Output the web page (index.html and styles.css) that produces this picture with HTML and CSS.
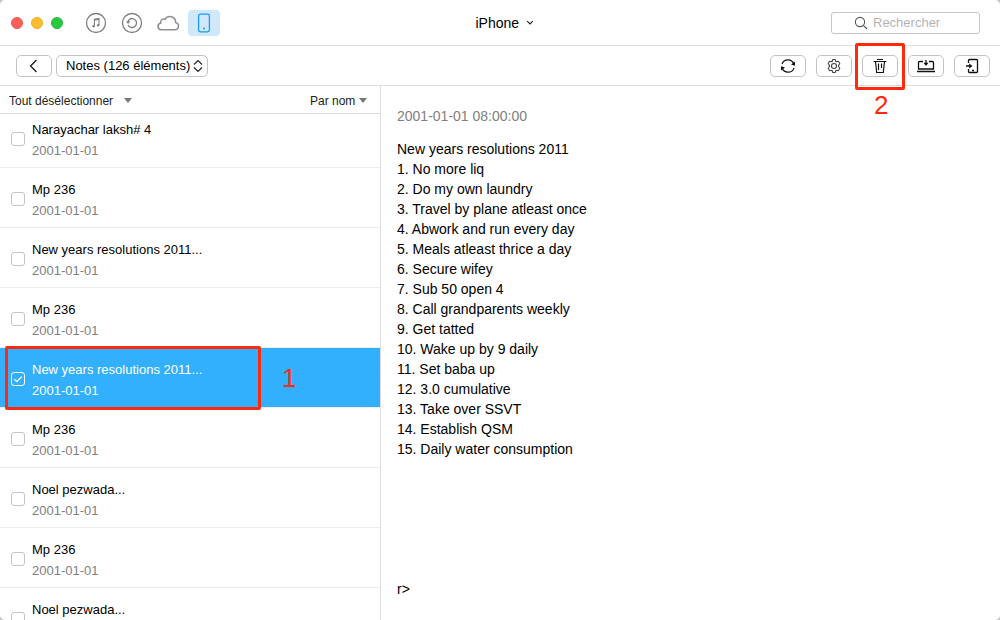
FILE: index.html
```html
<!DOCTYPE html>
<html lang="fr">
<head>
    <meta charset="UTF-8">
    <meta name="viewport" content="width=device-width, initial-scale=1.0">
    <title>iPhone - Notes</title>
    <link rel="stylesheet" href="styles.css">
</head>
<body>
    <div class="window">
        <header class="titlebar">
            <div class="titlebar-left">
                <div class="lights">
                    <button class="light red" aria-label="Fermer"></button>
                    <button class="light yellow" aria-label="Réduire"></button>
                    <button class="light green" aria-label="Agrandir"></button>
                </div>
                <nav class="tabs">
                    <button class="tab" aria-label="iTunes">
                        <svg width="22" height="22" viewBox="0 0 22 22" fill="none" stroke="#808080">
                            <circle cx="11" cy="11" r="9.5" stroke-width="1.3"/>
                            <path d="M9.4 14V7.2l4.600-.9v6.700M9.400 8.200l4.600-.9" stroke-width="1.1"/>
                            <ellipse cx="8.600" cy="14.200" rx="1" ry=".8" fill="#808080"/>
                            <ellipse cx="13.200" cy="13.200" rx="1" ry=".8" fill="#808080"/>
                        </svg>
                    </button>
                    <button class="tab" aria-label="Sauvegardes">
                        <svg width="22" height="22" viewBox="0 0 22 22" fill="none" stroke="#808080">
                            <circle cx="11" cy="11" r="9.5" stroke-width="1.3"/>
                            <path d="M8.200 7.500A4.500 4.500 0 1 1 7 13" stroke-width="1.300"/>
                            <path d="M5.200 9.200h4.200L7 12z" fill="#808080" stroke="none"/>
                            <path d="M7 10.500a4.500 4.500 0 0 1 1.200-3" stroke-width="1.300"/>
                        </svg>
                    </button>
                    <button class="tab" aria-label="iCloud">
                        <svg width="24" height="18" viewBox="0 0 24 18" fill="none" stroke="#8f8f8f" stroke-width="1.5">
                            <path d="M5 15.800h13.800a3.700 3.700 0 0 0 .8-7.300A5.700 5.700 0 0 0 9 5.400 3 3 0 0 0 4.800 8.900 3.500 3.500 0 0 0 5 15.800z"/>
                        </svg>
                    </button>
                    <button class="tab active" aria-label="Appareil">
                        <svg width="14" height="20" viewBox="0 0 14 20" fill="none" stroke="#1a9bf0">
                            <rect x="1.6" y="1.200" width="10.800" height="17.600" rx="1.800" stroke-width="1.300"/>
                            <circle cx="7" cy="15.500" r="1" fill="#1a9bf0" stroke="none"/>
                        </svg>
                    </button>
                </nav>
            </div>
            <div class="dropdown device">
                <select aria-label="Appareil">
                    <option>iPhone</option>
                </select>
                <svg width="8" height="6" viewBox="0 0 8 6" fill="none" stroke="#222" stroke-width="1.2"><path d="M1.200 1.200L4 4l2.800-2.800"/></svg>
            </div>
            <div class="search">
                <svg width="14" height="14" viewBox="0 0 14 14" fill="none" stroke="#555" stroke-width="1.1">
                    <circle cx="6" cy="6" r="4.600"/><path d="M9.300 9.300L13 13"/>
                </svg>
                <input type="text" placeholder="Rechercher" aria-label="Rechercher">
            </div>
        </header>

        <div class="toolbar">
            <button class="tool" aria-label="Retour">
                <svg width="16" height="16" viewBox="0 0 16 16" fill="none" stroke="#111" stroke-width="1.200"><path d="M10.500 2L4.500 8l6 6"/></svg>
            </button>
            <div class="dropdown category">
                <select aria-label="Catégorie">
                    <option>Notes (126 éléments)</option>
                </select>
                <svg width="10" height="14" viewBox="0 0 10 14" fill="none" stroke="#222" stroke-width="1.200"><path d="M1 5.500l4-4 4 4M1 8.500l4 4 4-4"/></svg>
            </div>
            <div class="actions">
                <button class="tool" aria-label="Actualiser">
                    <svg width="16" height="16" viewBox="0 0 16 16" fill="none" stroke="#111" stroke-width="1.200">
                        <path d="M2 6.200A6.200 6.200 0 0 1 13.800 6M14 9.800A6.200 6.200 0 0 1 2.200 10"/>
                        <path d="M15 3.500v4.200l-4-1.200zM1 12.500V8.300l4 1.200z" fill="#111" stroke="none"/>
                    </svg>
                </button>
                <button class="tool" aria-label="Réglages">
                    <svg width="16" height="16" viewBox="0 0 16 16" fill="none" stroke="#444" stroke-width="1.100" stroke-linejoin="round">
                        <path d="M6.800 1.500h2.400l.8 2.200 2.300-.4 1.500 2.200-1.500 2.500 1.500 2.500-1.500 2.200-2.300-.4-.8 2.200H6.800L6 12.300l-2.300.4-1.500-2.200L3.700 8 2.200 5.500l1.500-2.200 2.300.4z"/>
                        <circle cx="8" cy="8" r="2.500"/>
                    </svg>
                </button>
                <div class="tool-slot">
                    <button class="tool" aria-label="Supprimer">
                        <svg width="16" height="16" viewBox="0 0 16 16" fill="none" stroke="#111" stroke-width="1.200">
                            <path d="M1.500 3.500h13M5 1.500h6M3.500 3.500l1.200 11h6.600l1.200-11M6.500 5.500v6.500M9.500 5.500v4.500"/>
                        </svg>
                    </button>
                    <div class="callout callout-delete"></div>
                    <span class="step step-delete">2</span>
                </div>
                <button class="tool" aria-label="Exporter vers l'ordinateur">
                    <svg width="20" height="16" viewBox="0 0 20 16" fill="none" stroke="#111" stroke-width="1.300">
                        <path d="M7 3.500H3.500q-1 0-1 1v6.500h15V4.500q0-1-1-1H13M1 13.500h18M10 2v4"/>
                        <path d="M7.500 4.800h5L10 8z" fill="#111" stroke="none"/>
                    </svg>
                </button>
                <button class="tool" aria-label="Exporter vers l'appareil">
                    <svg width="16" height="16" viewBox="0 0 16 16" fill="none" stroke="#111" stroke-width="1.300">
                        <path d="M4.500 5V2.500q0-1 1-1h7q1 0 1 1v11q0 1-1 1h-7q-1 0-1-1V11M2 8h4M8 12.500h2"/>
                        <path d="M5.200 5.500v5L8.500 8z" fill="#111" stroke="none"/>
                    </svg>
                </button>
            </div>
        </div>

        <main class="content">
            <section class="sidebar">
                <div class="list-header">
                    <div class="dropdown">
                        <select aria-label="Sélection">
                            <option>Tout désélectionner</option>
                        </select>
                        <span class="caret"></span>
                    </div>
                    <div class="dropdown sort">
                        <select aria-label="Trier">
                            <option>Par nom</option>
                        </select>
                        <span class="caret"></span>
                    </div>
                </div>
                <div class="list">
                    <label class="note">
                        <input type="checkbox">
                        <span class="note-text"><span class="note-title">Narayachar laksh# 4</span><span class="note-date">2001-01-01</span></span>
                    </label>
                    <label class="note">
                        <input type="checkbox">
                        <span class="note-text"><span class="note-title">Mp 236</span><span class="note-date">2001-01-01</span></span>
                    </label>
                    <label class="note">
                        <input type="checkbox">
                        <span class="note-text"><span class="note-title">New years resolutions 2011...</span><span class="note-date">2001-01-01</span></span>
                    </label>
                    <label class="note">
                        <input type="checkbox">
                        <span class="note-text"><span class="note-title">Mp 236</span><span class="note-date">2001-01-01</span></span>
                    </label>
                    <label class="note selected">
                        <input type="checkbox" checked>
                        <svg class="tick" width="14" height="14" viewBox="0 0 14 14" fill="none" stroke="#fff" stroke-width="1.200"><path d="M3.300 7.200l2.500 2.500 5-5.200"/></svg>
                        <span class="note-text"><span class="note-title">New years resolutions 2011...</span><span class="note-date">2001-01-01</span></span>
                        <span class="callout callout-note"></span>
                        <span class="step step-note">1</span>
                    </label>
                    <label class="note">
                        <input type="checkbox">
                        <span class="note-text"><span class="note-title">Mp 236</span><span class="note-date">2001-01-01</span></span>
                    </label>
                    <label class="note">
                        <input type="checkbox">
                        <span class="note-text"><span class="note-title">Noel pezwada...</span><span class="note-date">2001-01-01</span></span>
                    </label>
                    <label class="note">
                        <input type="checkbox">
                        <span class="note-text"><span class="note-title">Mp 236</span><span class="note-date">2001-01-01</span></span>
                    </label>
                    <label class="note">
                        <input type="checkbox">
                        <span class="note-text"><span class="note-title">Noel pezwada...</span></span>
                    </label>
                </div>
            </section>
            <article class="detail">
                <time class="detail-date">2001-01-01 08:00:00</time>
                <div class="detail-body">New years resolutions 2011
1. No more liq
2. Do my own laundry
3. Travel by plane atleast once
4. Abwork and run every day
5. Meals atleast thrice a day
6. Secure wifey
7. Sub 50 open 4
8. Call grandparents weekly
9. Get tatted
10. Wake up by 9 daily
11. Set baba up
12. 3.0 cumulative
13. Take over SSVT
14. Establish QSM
15. Daily water consumption






r&gt;</div>
            </article>
        </main>
    </div>
</body>
</html>
```
FILE: styles.css
```css
* {
    box-sizing: border-box;
}
body {
    margin: 0;
    background: #c4c4c4;
    font-family: "Liberation Sans", Arial, sans-serif;
    font-size: 13px;
    color: #000;
}
button, input, select {
    margin: 0;
    padding: 0;
    font: inherit;
    color: inherit;
}
svg {
    display: block;
    flex-shrink: 0;
}
.window {
    display: flex;
    flex-direction: column;
    height: 100vh;
    background: #fff;
    border-radius: 5px;
    overflow: hidden;
}

/* Title bar */
.titlebar {
    display: grid;
    grid-template-columns: 1fr auto 1fr;
    align-items: center;
    height: 46px;
    padding: 0 20px 0 11px;
    border-bottom: 1px solid #dedede;
}
.titlebar-left {
    display: flex;
    align-items: center;
    gap: 17px;
}
.lights {
    display: flex;
    gap: 8px;
}
.light {
    width: 12px;
    height: 12px;
    border: 1px solid;
    border-radius: 50%;
}
.red {
    background: #ff5f57;
    border-color: #e9544d;
}
.yellow {
    background: #ffbd2e;
    border-color: #e9ab2c;
}
.green {
    background: #28c940;
    border-color: #24b53a;
}
.tabs {
    display: flex;
    gap: 4px;
}
.tab {
    display: flex;
    align-items: center;
    justify-content: center;
    width: 32px;
    height: 26px;
    background: none;
    border: none;
    border-radius: 4px;
}
.tab.active {
    background: #d1e8fb;
}
.dropdown {
    position: relative;
    display: flex;
    align-items: center;
}
.dropdown select {
    appearance: none;
    background: none;
    border: none;
    outline: none;
}
.dropdown svg,
.dropdown .caret {
    position: absolute;
    right: 0;
    pointer-events: none;
}
.device {
    margin-left: 18px;
    font-size: 14px;
}
.device select {
    padding-right: 14px;
}
.search {
    position: relative;
    display: flex;
    align-items: center;
    justify-self: end;
}
.search svg {
    position: absolute;
    left: 23px;
}
.search input {
    width: 149px;
    height: 22px;
    padding-left: 41px;
    border: 1px solid #c6c6c6;
    border-radius: 3px;
}
.search input::placeholder {
    color: #b4b4b4;
}

/* Toolbar */
.toolbar {
    display: flex;
    align-items: center;
    gap: 4px;
    height: 40px;
    padding: 0 10px 0 16px;
    border-bottom: 1px solid #dedede;
}
.tool {
    display: flex;
    align-items: center;
    justify-content: center;
    width: 36px;
    height: 22px;
    background: #fff;
    border: 1px solid #c4c4c4;
    border-radius: 5px;
}
.toolbar .category select {
    height: 22px;
    padding: 0 16px 0 9px;
    border: 1px solid #c4c4c4;
    border-radius: 5px;
}
.category svg {
    right: 5px;
}
.actions {
    display: flex;
    gap: 10px;
    margin-left: auto;
}
.tool-slot {
    position: relative;
}

/* Notes list */
.content {
    display: grid;
    grid-template-columns: 38% 1fr;
    flex: 1;
    min-height: 0;
}
.sidebar {
    display: flex;
    flex-direction: column;
    min-height: 0;
}
.list-header {
    display: flex;
    align-items: center;
    justify-content: space-between;
    flex-shrink: 0;
    height: 28px;
    padding: 2px 13px 0 9px;
    border-bottom: 1px solid #dedede;
    font-size: 12px;
    color: #222;
}
.list-header select {
    padding-right: 18px;
}
.list-header .sort select {
    padding-right: 11px;
}
.caret {
    border: 4px solid transparent;
    border-top: 5px solid #777;
    border-bottom: 0;
}
.list {
    flex: 1;
    overflow: hidden;
}
.note {
    position: relative;
    display: flex;
    align-items: center;
    gap: 7px;
    height: 60px;
    padding: 4px 11px 0;
    border-bottom: 1px solid #eee;
}
/* list is scrolled slightly past its first row */
.note:first-child {
    margin-top: -6px;
}
.note input {
    appearance: none;
    width: 14px;
    height: 14px;
    margin-bottom: 2px;
    border: 1px solid #c4c4c4;
    border-radius: 3px;
}
.note-text {
    display: flex;
    flex-direction: column;
    min-height: 42px;
    line-height: 21px;
}
.note-date {
    color: #808080;
}
.note.selected {
    background: #32b0fd;
    color: #fff;
}
.note.selected input {
    border-color: #fff;
}
.note.selected .note-date {
    color: #fff;
}
.tick {
    position: absolute;
    left: 11px;
    margin-bottom: 2px;
}

/* Note content */
.detail {
    padding: 20px 16px;
    border-left: 1px solid #dedede;
    font-size: 14px;
    line-height: 20px;
    overflow: hidden;
}
.detail-date {
    display: block;
    margin-bottom: 13px;
    color: #808080;
}
.detail-body {
    white-space: pre-wrap;
}

/* Step markers */
.callout {
    position: absolute;
    border: 3px solid #ff2a0c;
    border-radius: 2px;
    pointer-events: none;
}
.callout-note {
    top: -2px;
    left: 5px;
    width: 256px;
    height: 64px;
    z-index: 1;
}
.callout-delete {
    top: -12px;
    left: -7px;
    width: 50px;
    height: 47px;
}
.step {
    position: absolute;
    font-size: 26px;
    line-height: 26px;
    color: #ff2a0c;
}
.step-note {
    top: 17px;
    left: 282px;
}
.step-delete {
    top: 37px;
    left: 12px;
}
```
